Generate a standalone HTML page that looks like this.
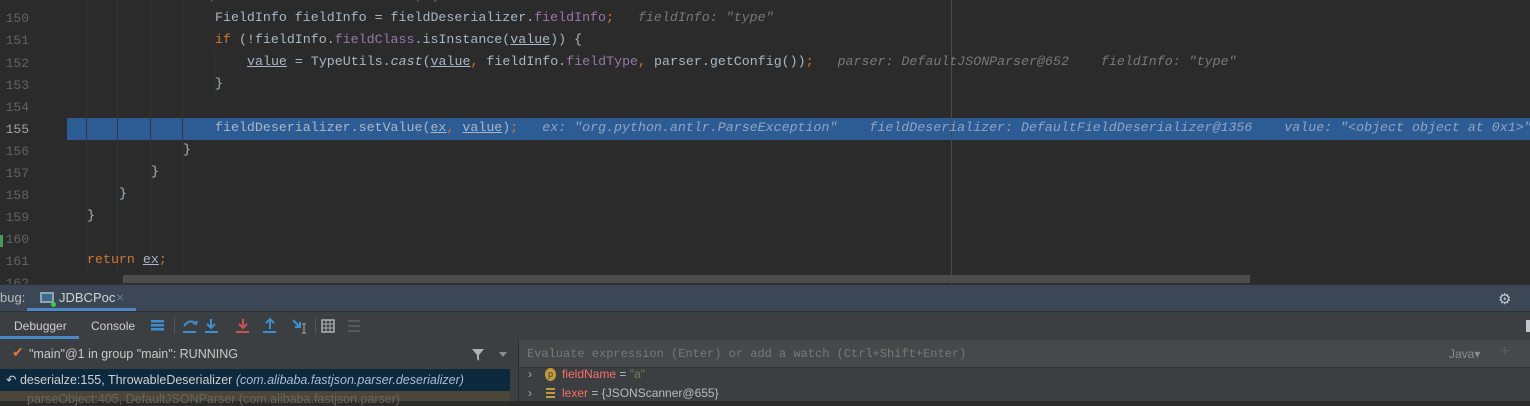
<!DOCTYPE html>
<html><head><meta charset="utf-8"><style>
*{margin:0;padding:0;box-sizing:border-box}
body{width:1530px;height:401px;overflow:hidden;background:#2b2b2b;position:relative;font-family:"Liberation Sans",sans-serif}
.mono{font-family:"Liberation Mono",monospace;font-size:13.3px}
.ln{position:absolute;left:0;width:29px;text-align:right;color:#606366;font-family:"Liberation Mono",monospace;font-size:13px}
.code{position:absolute;white-space:pre;color:#a9b7c6;font-family:"Liberation Mono",monospace;font-size:13.3px}
.k{color:#cc7832}.f{color:#9876aa}.h{color:#787878;font-style:italic}.u{text-decoration:underline}
.g{position:absolute;width:1px;background:#363636;top:0;height:275px}
.abs{position:absolute}
</style></head><body>
<div class="abs" style="left:67px;top:118px;width:1463px;height:22px;background:#2d5c95"></div>
<div class="g" style="left:86px"></div><div class="g" style="left:117px"></div><div class="g" style="left:150px"></div><div class="g" style="left:182px"></div>
<div class="abs" style="left:214px;top:52px;width:1px;height:42px;background:#363636"></div>
<div class="abs" style="left:951px;top:0;width:1px;height:284px;background:#4a4a4a"></div>

<div class="ln" style="top:11px">150</div>
<div class="ln" style="top:33px">151</div>
<div class="ln" style="top:56px">152</div>
<div class="ln" style="top:78px">153</div>
<div class="ln" style="top:100px">154</div>
<div class="ln" style="top:122px;color:#a4a3a3">155</div>
<div class="ln" style="top:144px">156</div>
<div class="ln" style="top:166px">157</div>
<div class="ln" style="top:188px">158</div>
<div class="ln" style="top:210px">159</div>
<div class="ln" style="top:232px">160</div>
<div class="ln" style="top:254px">161</div>
<div class="ln" style="top:276px">162</div>

<div class="code" style="left:183px;top:-12px;color:#6a6a6a">if (fieldDeserializer != null) {</div>
<div class="code" style="left:215px;top:10px">FieldInfo fieldInfo = fieldDeserializer.<span class="f">fieldInfo</span><span class="k">;</span>   <span class="h">fieldInfo: "type"</span></div>
<div class="code" style="left:215px;top:32px"><span class="k">if</span> (!fieldInfo.<span class="f">fieldClass</span>.isInstance(<span class="u">value</span>)) {</div>
<div class="code" style="left:247px;top:54px"><span class="u">value</span> = TypeUtils.<i>cast</i>(<span class="u">value</span><span class="k">,</span> fieldInfo.<span class="f">fieldType</span><span class="k">,</span> parser.getConfig())<span class="k">;</span>   <span class="h">parser: DefaultJSONParser@652    fieldInfo: "type"</span></div>
<div class="code" style="left:215px;top:76px">}</div>
<div class="code" style="left:215px;top:120px">fieldDeserializer.setValue(<span class="u">ex</span><span class="k">,</span> <span class="u">value</span>)<span class="k">;</span>   <span class="h" style="color:#8ea5c4">ex: "org.python.antlr.ParseException"    fieldDeserializer: DefaultFieldDeserializer@1356    value: "&lt;object object at 0x1&gt;"</span></div>
<div class="code" style="left:183px;top:142px">}</div>
<div class="code" style="left:151px;top:164px">}</div>
<div class="code" style="left:119px;top:186px">}</div>
<div class="code" style="left:87px;top:208px">}</div>
<div class="code" style="left:87px;top:252px"><span class="k">return</span> <span class="u">ex</span><span class="k">;</span></div>

<div class="abs" style="left:0;top:235px;width:3px;height:12px;background:#499c54"></div>
<div class="abs" style="left:123px;top:275px;width:1127px;height:8px;background:#4d4d4d"></div>

<div class="abs" style="left:0;top:284px;width:1530px;height:27px;background:#3b4754;border-top:1px solid #323232"></div>
<div class="abs" style="left:0;top:290px;font-size:13px;color:#bbb">bug:</div>
<div class="abs" style="left:40px;top:292px;width:14px;height:11px;border:2px solid #8fa3b5;background:#3b6a8a"></div>
<div class="abs" style="left:51px;top:302px;width:5px;height:5px;border-radius:50%;background:#3fcb3f"></div>
<div class="abs" style="left:59px;top:290px;font-size:13px;color:#cfd4d8">JDBCPoc</div>
<div class="abs" style="left:116px;top:289px;font-size:14px;color:#6f7a84">×</div>
<div class="abs" style="left:27px;top:308px;width:109px;height:3px;background:#4a88c7"></div>
<div class="abs" style="left:1498px;top:290px;font-size:15px;color:#c0c6cc">⚙</div>

<div class="abs" style="left:0;top:311px;width:1530px;height:29px;background:#3c3f41;border-top:1px solid #2f3133"></div>
<div class="abs" style="left:14px;top:319px;font-size:12px;color:#cfcfcf">Debugger</div>
<div class="abs" style="left:91px;top:319px;font-size:12px;color:#cfcfcf">Console</div>
<div class="abs" style="left:0;top:336px;width:79px;height:3px;background:#4a88c7"></div>
<svg class="abs" style="left:145px;top:311px" width="230" height="29">
<g fill="#3d8fd1"><rect x="6" y="9" width="13" height="2.5"/><rect x="6" y="13" width="13" height="2.5"/><rect x="6" y="17" width="13" height="2.5"/></g>
<rect x="29" y="6" width="1" height="17" fill="#555"/>
<g stroke="#3d8fd1" stroke-width="2" fill="none"><path d="M39 15 Q45 7 51 13"/><path d="M48 12 L51 13 L52 10"/><path d="M66 8 V16 M62 13 L66 17 L70 13"/><path d="M125 18 V9 M121 12 L125 8 L129 12"/><path d="M148 9 L155 16 M155 11 V16 H150"/></g>
<g fill="#3d8fd1"><rect x="38" y="20" width="13" height="2"/><rect x="60" y="20" width="13" height="2"/><rect x="118" y="20" width="13" height="2"/></g>
<g stroke="#c75450" stroke-width="2" fill="none"><path d="M98 8 V16 M94 13 L98 17 L102 13"/></g><rect x="91" y="20" width="13" height="2" fill="#c75450"/>
<path d="M159 13 V22 M157 13 H161 M157 22 H161" stroke="#aaa" stroke-width="1"/>
<rect x="170" y="6" width="1" height="17" fill="#555"/>
<rect x="177" y="9" width="12" height="12" fill="none" stroke="#afb1b3" stroke-width="1.5"/><path d="M177 13 H189 M177 17 H189 M181 9 V21 M185 9 V21" stroke="#afb1b3"/>
<path d="M203 10 H215 M203 15 H215 M203 20 H215" stroke="#5e6164" stroke-width="1.5"/>
</svg>
<div class="abs" style="left:1526px;top:320px;width:4px;height:12px;background:#c0c6cc"></div>

<div class="abs" style="left:0;top:340px;width:518px;height:61px;background:#3c3f41"></div>
<div class="abs" style="left:12px;top:344px;font-size:14px;color:#e0763b">✔</div>
<div class="abs" style="left:29px;top:347px;font-size:12.5px;color:#c8c8c8">"main"@1 in group "main": RUNNING</div>
<svg class="abs" style="left:472px;top:348px" width="40" height="14"><path d="M0 1 H12 L7 7 V13 L5 11 V7 Z" fill="#afb1b3"/><path d="M27 4 H35 L31 9 Z" fill="#8a8c8e"/></svg>
<div class="abs" style="left:0;top:369px;width:510px;height:22px;background:#0d293e"></div>
<div class="abs" style="left:6px;top:372px;font-size:12.5px;color:#d0d0d0">↶ deserialze:155, ThrowableDeserializer <i style="color:#a9bfd6">(com.alibaba.fastjson.parser.deserializer)</i></div>
<div class="abs" style="left:0;top:391px;width:510px;height:10px;background:#4b4637"></div>
<div class="abs" style="left:27px;top:392px;font-size:12.5px;color:#6a6658">parseObject:405, DefaultJSONParser (com.alibaba.fastjson.parser)</div>
<div class="abs" style="left:510px;top:368px;width:8px;height:33px;background:#3c3f41"></div>

<div class="abs" style="left:518px;top:340px;width:1px;height:61px;background:#2b2b2b"></div>
<div class="abs" style="left:519px;top:340px;width:1011px;height:28px;background:#45494a;border-bottom:1px solid #323232"></div>
<div class="abs mono" style="left:527px;top:347px;font-size:12px;color:#787878">Evaluate expression (Enter) or add a watch (Ctrl+Shift+Enter)</div>
<div class="abs" style="left:1449px;top:347px;font-size:12px;color:#8c8c8c">Java▾</div>
<div class="abs" style="left:1500px;top:343px;font-size:16px;color:#5a5d5f">+</div>
<div class="abs" style="left:519px;top:368px;width:1011px;height:33px;background:#3c3f41"></div>
<div class="abs" style="left:528px;top:367px;font-size:12px;color:#aaa">›</div>
<div class="abs" style="left:545px;top:368px;width:11px;height:13px;border-radius:50%;background:#c39a3a;font-size:9px;color:#3c3f41;text-align:center;line-height:13px">p</div>
<div class="abs" style="left:562px;top:367px;font-size:12px;color:#ff6b68">fieldName <span style="color:#bbb">=</span> <span style="color:#6a8759">"a"</span></div>
<div class="abs" style="left:528px;top:386px;font-size:12px;color:#aaa">›</div>
<div class="abs" style="left:546px;top:388px;width:9px;height:11px;background:repeating-linear-gradient(#c39a3a 0 2px,#3c3f41 2px 4px)"></div>
<div class="abs" style="left:562px;top:386px;font-size:12px;color:#ff6b68">lexer <span style="color:#bbb">= {JSONScanner@655}</span></div>
</body></html>
